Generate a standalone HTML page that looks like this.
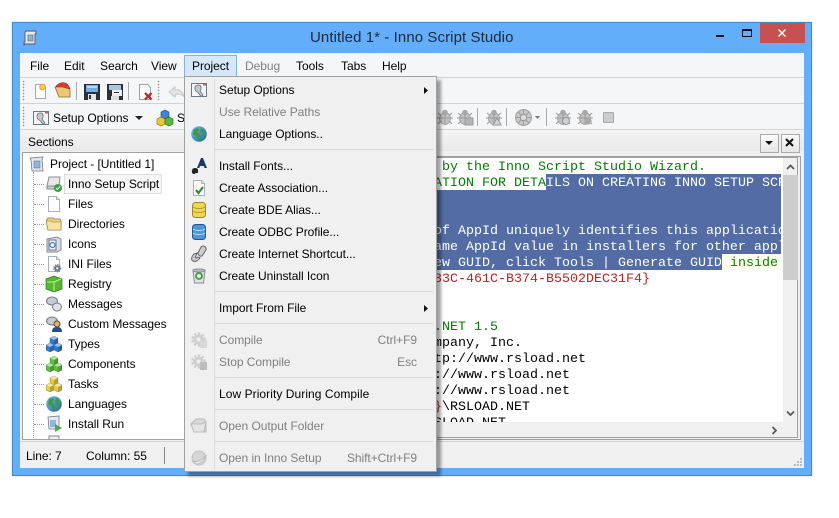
<!DOCTYPE html>
<html><head><meta charset="utf-8">
<style>
html,body{margin:0;padding:0;background:#fff}
#r{position:relative;width:839px;height:518px;overflow:hidden;background:#fff;font:12px "Liberation Sans",sans-serif;color:#000}
#r div,#r svg,#r span.t{position:absolute}
.t{white-space:pre;line-height:16px;letter-spacing:-.05px}
.g{color:#808080}
.c{font:13.33px/16px "Liberation Mono",monospace;white-space:pre;letter-spacing:0;height:14px;padding-top:2px}
.i{width:16px;height:16px;overflow:visible}
.sep{background:#aaa;width:1px}
.ms{left:215px;width:218px;height:1px;background:#d7d7d7}
.h{background-image:radial-gradient(#999 .7px,transparent .9px);background-size:3px 3px;width:3px}
</style></head><body>
<svg width="0" height="0" style="position:absolute">
<defs>
<linearGradient id="gl" x1="0" y1="0" x2="1" y2="1"><stop offset="0" stop-color="#7cc0ee"/><stop offset="1" stop-color="#1c5fa8"/></linearGradient>
<symbol id="cube" viewBox="0 0 16 16"><path d="M4 2l4-2 4 2v5l-4 2-4-2zM0 9l4-2 4 2 4-2 4 2v5l-4 2-4-2-4 2-4-2z" fill="currentColor" stroke="#0005" stroke-width=".6"/><path d="M4 2l4-2 4 2-4 2zM0 9l4-2 4 2-4 2zM8 9l4-2 4 2-4 2z" fill="#fff8"/><path d="M8 4l4-2v5l-4 2zM4 11l4-2v5l-4 2zM12 11l4-2v5l-4 2z" fill="#0003"/></symbol>
<symbol id="globe" viewBox="0 0 16 16"><circle cx="8" cy="8" r="7.800" fill="url(#gl)"/><path d="M3 3l4-1 1 2-2 2 2 2 1 3-2 3-2-4-3-2zM10 2l3 2 1 4-2 1-1-2-2-1zM11 10l2 0-1 3-2 0z" fill="#3f9a3a"/></symbol>
<symbol id="page" viewBox="0 0 16 16"><path d="M2.500.5h8l3 3v12h-11z" fill="#fff" stroke="#aab0b8"/><path d="M10.500.5v3h3" fill="#e8e8e8" stroke="#aab0b8"/></symbol>
<symbol id="folder" viewBox="0 0 16 16"><path d="M0 5l2-3h5l1 1h6l1 2v9H2z" fill="#eccf82" stroke="#97793c" stroke-width=".8"/><path d="M0 5l5 0 1 1h9l0 8H2z" fill="#f8e2a4" stroke="#97793c" stroke-width=".6"/></symbol>
<symbol id="gear" viewBox="0 0 16 16"><circle cx="7.500" cy="7.500" r="5.800" fill="none" stroke="currentColor" stroke-width="3" stroke-dasharray="2.200 1.600"/><circle cx="7.500" cy="7.500" r="5" fill="currentColor"/><circle cx="7.500" cy="7.500" r="2" fill="#eee"/></symbol>
<symbol id="opt" viewBox="0 0 16 16"><rect x=".5" y="1.500" width="15" height="13" fill="#f4f5f6" stroke="#6e7882"/><rect x="12" y="2" width="3" height="1.500" fill="#d55"/><path d="M4 5a3.500 3.500 0 0 1 5-1.500C11 5 10 8 9 9L12 13 10 14.500 7 10.500C5 10 3.500 8 4 5z" fill="#c5c8cc" stroke="#6a7078" stroke-width=".8"/></symbol>
<symbol id="bug" viewBox="0 0 16 16"><ellipse cx="8" cy="9.500" rx="5.500" ry="6" fill="#c2c2c2" stroke="#9a9a9a" stroke-width=".7"/><circle cx="8" cy="3.500" r="2.800" fill="#a8a8a8"/><path d="M1 4l3 2.500M15 4l-3 2.500M0 9h3M16 9h-3M1 15l3-3M15 15l-3-3M8 5v10M3 9h10" stroke="#999" fill="none"/></symbol>
</defs></svg>
<div id="r">
<!-- window -->
<div style="left:12px;top:22px;width:798px;height:452px;background:#63aefb;border:1px solid #3f8cc9;box-shadow:0 0 2px #ccc"></div>
<svg class="i" style="left:22px;top:30px" viewBox="0 0 16 16"><path d="M4 1h10v3h-1v10H3l-1 1v-3h1V2z" fill="#e8e8e8" stroke="#556" stroke-width=".9"/><path d="M6 5h5v6H6z" fill="#8ab4d8" stroke="#556" stroke-width=".6"/></svg>
<span class="t" style="left:310px;top:29px;font-size:15px;line-height:18px;letter-spacing:.08px;color:#1c2a38">Untitled 1* - Inno Script Studio</span>
<svg style="left:716px;top:35px" width="9" height="3"><rect width="8" height="2" fill="#111"/></svg>
<svg style="left:742px;top:29px" width="11" height="9"><rect x=".5" y=".5" width="9" height="7" fill="none" stroke="#111"/><rect x="0" y="0" width="10" height="2" fill="#111"/></svg>
<div style="left:760px;top:23px;width:45px;height:20px;background:#c75050"></div>
<svg style="left:778px;top:29px" width="9" height="9"><path d="M.5.500l7 7M7.500.500l-7 7" stroke="#fff" stroke-width="1.500"/></svg>
<!-- client -->
<div style="left:20px;top:53px;width:784px;height:415px;background:#f0f0f0"></div>
<div style="left:20px;top:53px;width:784px;height:24px;background:#f5f6f8"></div>
<div style="left:20px;top:77px;width:784px;height:1px;background:#d2d2d2"></div>
<div style="left:20px;top:78px;width:784px;height:25px;background:#f5f6f8"></div>
<div style="left:20px;top:103px;width:784px;height:1px;background:#d2d2d2"></div>
<div style="left:20px;top:104px;width:784px;height:25px;background:#f5f6f8"></div>
<div style="left:20px;top:129px;width:784px;height:1px;background:#d2d2d2"></div>
<div style="left:20px;top:130px;width:784px;height:21px;background:linear-gradient(#f4f4f4,#e9e9e9)"></div>
<!-- menu bar -->
<div style="left:184px;top:55px;width:51px;height:20px;background:#d5e7f8;border:1px solid #7eb4ea"></div>
<span class="t" style="left:30px;top:58px">File</span>
<span class="t" style="left:64px;top:58px">Edit</span>
<span class="t" style="left:100px;top:58px">Search</span>
<span class="t" style="left:151px;top:58px">View</span>
<span class="t" style="left:192px;top:58px">Project</span>
<span class="t g" style="left:245px;top:58px">Debug</span>
<span class="t" style="left:296px;top:58px">Tools</span>
<span class="t" style="left:341px;top:58px">Tabs</span>
<span class="t" style="left:382px;top:58px">Help</span>
<!-- toolbar 1 -->
<div class="h" style="left:22px;top:80px;height:21px"></div>
<svg class="i" style="left:32px;top:83px" viewBox="0 0 16 16"><path d="M3.500 1.500h8l2 2v12h-10z" fill="#fff" stroke="#a4aab0"/><circle cx="10.500" cy="4" r="2.800" fill="#f7c948" stroke="#f0a828"/></svg>
<svg class="i" style="left:55px;top:82px" viewBox="0 0 16 16"><path d="M0 5l3-1h9l3 3v8H4z" fill="#ecc874" stroke="#87683a" stroke-width=".8"/><path d="M1 5c1-3 5-5 9-4 3 1 4 3 5 6l-4-1-3-1z" fill="#d93f2b" stroke="#8a2418" stroke-width=".6"/></svg>
<div class="sep" style="left:76px;top:82px;height:18px"></div>
<svg class="i" style="left:84px;top:84px" viewBox="0 0 16 16"><path d="M0 0h16v16H0z" fill="#2b2f38"/><rect x="2" y="1" width="12" height="7" fill="#6cb0ea"/><rect x="3" y="2.500" width="10" height="1" fill="#fff"/><rect x="4" y="10" width="8" height="6" fill="#e4e4e4"/><rect x="5" y="11" width="2" height="4" fill="#333"/></svg>
<svg class="i" style="left:107px;top:84px" viewBox="0 0 16 16"><path d="M0 0h16v16H0z" fill="#2b2f38"/><rect x="2" y="1" width="12" height="5" fill="#a8c6de"/><rect x="5" y="6" width="10" height="6" fill="#eee"/><rect x="7" y="8" width="5" height="1" fill="#333"/><rect x="4" y="12" width="8" height="4" fill="#ddd"/></svg>
<div class="sep" style="left:128px;top:82px;height:18px"></div>
<svg class="i" style="left:138px;top:84px" viewBox="0 0 16 16"><path d="M1.500.5h8l3 3v12h-11z" fill="#fff" stroke="#98a0a8"/><path d="M7 9l6.500 6.500M13.500 9L7 15.500" stroke="#c81e1e" stroke-width="2.200"/></svg>
<div class="h" style="left:157px;top:80px;height:21px"></div>
<svg class="i" style="left:169px;top:84px" viewBox="0 0 16 16"><path d="M0 8l6-5v3c5-1 8 2 9 7-2-3-5-3-8-3l-1 3z" fill="#e4e4e4" stroke="#c8c8c8"/></svg>
<!-- toolbar 2 -->
<div class="h" style="left:22px;top:106px;height:21px"></div>
<svg class="i" style="left:33px;top:110px"><use href="#opt"/></svg>
<span class="t" style="left:53px;top:110px">Setup Options</span>
<svg style="left:135px;top:116px" width="9" height="5"><path d="M0 0h8L4 4z" fill="#222"/></svg>
<svg class="i" style="left:157px;top:110px" viewBox="0 0 16 16"><path d="M4 2l4-2 4 2v5l-4 2-4-2z" fill="#3f86d0" stroke="#246" stroke-width=".6"/><path d="M0 9l4-2 4 2v5l-4 2-4-2z" fill="#e7c73e" stroke="#860" stroke-width=".6"/><path d="M8 9l4-2 4 2v5l-4 2-4-2z" fill="#5cb83c" stroke="#260" stroke-width=".6"/></svg>
<span class="t" style="left:177px;top:110px">Setup</span>
<!-- gray bugs right -->
<svg class="i" style="left:437px;top:109px"><use href="#bug"/></svg>
<svg class="i" style="left:457px;top:109px"><use href="#bug"/><rect x="8" y="9" width="8" height="7" fill="#b4b4b4" stroke="#999"/></svg>
<div class="sep" style="left:477px;top:108px;height:18px"></div>
<svg class="i" style="left:486px;top:109px"><use href="#bug"/><path d="M11 9l4 7H7z" fill="#d4d4d4" stroke="#999"/></svg>
<div class="sep" style="left:506px;top:108px;height:18px"></div>
<svg class="i" style="left:515px;top:109px;width:17px;height:17px" viewBox="0 0 16 16"><circle cx="8" cy="8" r="7.500" fill="#c8c8c8" stroke="#a4a4a4"/><path d="M8 .5v15M.5 8h15M3 3l10 10M13 3L3 13" stroke="#a0a0a0"/><circle cx="8" cy="8" r="3" fill="#ddd" stroke="#999"/></svg>
<svg style="left:535px;top:116px" width="6" height="4"><path d="M0 0h5L2.500 3z" fill="#777"/></svg>
<div class="sep" style="left:546px;top:108px;height:18px"></div>
<svg class="i" style="left:555px;top:109px"><use href="#bug"/><circle cx="11" cy="12" r="3.500" fill="#d0d0d0" stroke="#999"/></svg>
<svg class="i" style="left:577px;top:109px"><use href="#bug"/><circle cx="11" cy="12" r="3.500" fill="#a8a8a8"/></svg>
<div style="left:603px;top:112px;width:9px;height:9px;background:#ccc;border:1px solid #aaa;border-radius:1px"></div>
<!-- sections -->
<span class="t" style="left:28px;top:134px">Sections</span>
<div style="left:760px;top:134px;width:17px;height:17px;background:linear-gradient(#fbfbfb,#e6e6e6);border:1px solid #aaa"></div>
<svg style="left:765px;top:141px" width="9" height="5"><path d="M0 0h8L4 4z" fill="#111"/></svg>
<div style="left:781px;top:134px;width:17px;height:17px;background:linear-gradient(#fbfbfb,#e6e6e6);border:1px solid #aaa"></div>
<svg style="left:785px;top:138px" width="10" height="10"><path d="M1 1l7 7M8 1L1 8" stroke="#111" stroke-width="2"/></svg>
<!-- tree -->
<div style="left:22px;top:152px;width:165px;height:286px;background:#fff;border:1px solid #a0a0a0"></div>
<div style="left:33px;top:172px;width:0;height:266px;border-left:1px dotted #999"></div>
<div style="left:34px;top:184px;width:10px;border-top:1px dotted #999"></div>
<div style="left:34px;top:204px;width:10px;border-top:1px dotted #999"></div>
<div style="left:34px;top:224px;width:10px;border-top:1px dotted #999"></div>
<div style="left:34px;top:244px;width:10px;border-top:1px dotted #999"></div>
<div style="left:34px;top:264px;width:10px;border-top:1px dotted #999"></div>
<div style="left:34px;top:284px;width:10px;border-top:1px dotted #999"></div>
<div style="left:34px;top:304px;width:10px;border-top:1px dotted #999"></div>
<div style="left:34px;top:324px;width:10px;border-top:1px dotted #999"></div>
<div style="left:34px;top:344px;width:10px;border-top:1px dotted #999"></div>
<div style="left:34px;top:364px;width:10px;border-top:1px dotted #999"></div>
<div style="left:34px;top:384px;width:10px;border-top:1px dotted #999"></div>
<div style="left:34px;top:404px;width:10px;border-top:1px dotted #999"></div>
<div style="left:34px;top:424px;width:10px;border-top:1px dotted #999"></div>
<svg class="i" style="left:29px;top:156px" viewBox="0 0 16 16"><path d="M1 2l13-1-1 3 1 11H3L2 4z" fill="#dfe8f0" stroke="#778" stroke-width=".8"/><path d="M5 5h6v7H5z" fill="#8fb8da" stroke="#667" stroke-width=".5"/></svg>
<span class="t" style="left:50px;top:156px">Project - [Untitled 1]</span>
<div style="left:64px;top:174px;width:96px;height:18px;background:#f7f7f7;border:1px solid #dcdcdc"></div>
<svg class="i" style="left:46px;top:176px" viewBox="0 0 16 16"><path d="M3 1h11l-1 9H1z" fill="#e8e8e8" stroke="#889"/><path d="M1 10h11v3H1z" fill="#ccc" stroke="#889"/><circle cx="12" cy="12" r="4" fill="#3aa040"/><path d="M10 12l1.500 1.500L14 10.500" stroke="#fff" fill="none"/></svg>
<span class="t" style="left:68px;top:176px">Inno Setup Script</span>
<svg class="i" style="left:46px;top:196px"><use href="#page"/></svg>
<span class="t" style="left:68px;top:196px">Files</span>
<svg class="i" style="left:46px;top:216px"><use href="#folder"/></svg>
<span class="t" style="left:68px;top:216px">Directories</span>
<svg class="i" style="left:46px;top:236px" viewBox="0 0 16 16"><path d="M1 3l10-2 4 2v11l-4 2H1z" fill="#d6dde4" stroke="#889"/><path d="M3 4h7v10H3z" fill="#f0f4f8" stroke="#778"/><circle cx="6.500" cy="9" r="2.500" fill="none" stroke="#4a80c0" stroke-width="1.200"/></svg>
<span class="t" style="left:68px;top:236px">Icons</span>
<svg class="i" style="left:46px;top:256px"><use href="#page"/></svg>
<svg class="i" style="left:53px;top:264px;width:9px;height:9px;color:#6c7a88" viewBox="0 0 16 16"><use href="#gear"/></svg>
<span class="t" style="left:68px;top:256px">INI Files</span>
<svg class="i" style="left:46px;top:276px" viewBox="0 0 16 16"><path d="M0 3l8-3 8 3v10l-8 3-8-3z" fill="#55b82f" stroke="#2c7a16" stroke-width=".7"/><path d="M1 6h7v9M8 6l7-3" stroke="#c2f0a0" fill="none"/></svg>
<span class="t" style="left:68px;top:276px">Registry</span>
<svg class="i" style="left:46px;top:296px" viewBox="0 0 16 16"><ellipse cx="6" cy="5" rx="5.500" ry="4" fill="#c5ccd4" stroke="#778"/><ellipse cx="11" cy="11" rx="4.500" ry="4" fill="#dfe3e8" stroke="#778"/></svg>
<span class="t" style="left:68px;top:296px">Messages</span>
<svg class="i" style="left:46px;top:316px" viewBox="0 0 16 16"><ellipse cx="6" cy="5" rx="5.500" ry="4" fill="#c5ccd4" stroke="#778"/><circle cx="11" cy="8" r="3" fill="#e6b070" stroke="#643"/><path d="M6 16c0-4 2-5 5-5s5 1 5 5z" fill="#1f4e8c"/></svg>
<span class="t" style="left:68px;top:316px">Custom Messages</span>
<svg class="i" style="left:46px;top:336px;color:#2f7bd0"><use href="#cube"/></svg>
<span class="t" style="left:68px;top:336px">Types</span>
<svg class="i" style="left:46px;top:356px;color:#5cc23a"><use href="#cube"/></svg>
<span class="t" style="left:68px;top:356px">Components</span>
<svg class="i" style="left:46px;top:376px;color:#e8cb3c"><use href="#cube"/></svg>
<span class="t" style="left:68px;top:376px">Tasks</span>
<svg class="i" style="left:46px;top:396px"><use href="#globe"/></svg>
<span class="t" style="left:68px;top:396px">Languages</span>
<svg class="i" style="left:46px;top:416px" viewBox="0 0 16 16"><path d="M2 1l11-1v13H3z" fill="#e4eaf0" stroke="#778" stroke-width=".8"/><path d="M4 4h6v7H4z" fill="#8fb8da"/><path d="M9 8l7 4-7 4z" fill="#4fae3a"/></svg>
<span class="t" style="left:68px;top:416px">Install Run</span>
<svg class="i" style="left:46px;top:436px;height:3px" viewBox="0 0 16 3"><path d="M3 3V0h10v3" fill="#eee" stroke="#889"/></svg>
<!-- editor -->
<div style="left:187px;top:156px;width:612px;height:282px;background:#f0f0f0;border:1px solid #a0a0a0"></div>
<div style="left:188px;top:157px;width:608px;height:279px;border:1px solid #a0a0a0"></div>
<div style="left:189px;top:158px;width:594px;height:264px;background:#fff"></div>
<div style="left:189px;top:158px;width:592px;height:264px;background:#fff;overflow:hidden" id="ed">
<div style="left:357px;top:16px;width:235px;height:16px;background:#536ca3"></div>
<div style="left:0;top:32px;width:592px;height:64px;background:#536ca3"></div>
<div style="left:0;top:96px;width:533px;height:16px;background:#536ca3"></div>
<div style="left:533px;top:96px;width:59px;height:16px;background:#fffff0"></div>
<div class="c" style="left:253px;top:0;color:#008000">by the Inno Script Studio Wizard.</div>
<div class="c" style="left:245px;top:16px;color:#008000">ATION FOR DETA</div>
<div class="c" style="left:357px;top:16px;color:#fff">ILS ON CREATING INNO SETUP SCRIPT FILES</div>
<div class="c" style="left:245px;top:64px;color:#fff">of AppId uniquely identifies this application.</div>
<div class="c" style="left:245px;top:80px;color:#fff">ame AppId value in installers for other applications.</div>
<div class="c" style="left:245px;top:96px;color:#fff">ew GUID, click Tools | Generate GUID</div>
<div class="c" style="left:533px;top:96px;color:#008000"> inside the IDE.</div>
<div class="c" style="left:245px;top:112px;color:#c02020">83C-461C-B374-B5502DEC31F4}</div>
<div class="c" style="left:245px;top:160px;color:#008000">.NET 1.5</div>
<div class="c" style="left:245px;top:176px">mpany, Inc.</div>
<div class="c" style="left:245px;top:192px">tp://www.rsload.net</div>
<div class="c" style="left:245px;top:208px">://www.rsload.net</div>
<div class="c" style="left:245px;top:224px">://www.rsload.net</div>
<div class="c" style="left:245px;top:240px"><span style="color:#a03030">}</span>\RSLOAD.NET</div>
<div class="c" style="left:245px;top:256px">SLOAD.NET</div>
</div>
<!-- scrollbars -->
<div style="left:783px;top:175px;width:15px;height:105px;background:#cdcdcd"></div>
<svg style="left:786px;top:164px" width="9" height="7"><path d="M1 5l3.500-3.500L8 5" fill="none" stroke="#555" stroke-width="1.700"/></svg>
<svg style="left:786px;top:410px" width="9" height="7"><path d="M1 1.500L4.500 5 8 1.500" fill="none" stroke="#555" stroke-width="1.700"/></svg>
<svg style="left:771px;top:426px" width="7" height="9"><path d="M1.500 1L5 4.500 1.500 8" fill="none" stroke="#555" stroke-width="1.700"/></svg>
<!-- status -->
<div style="left:20px;top:441px;width:784px;height:1px;background:#d2d2d2"></div>
<span class="t" style="left:26px;top:448px">Line: 7</span>
<span class="t" style="left:86px;top:448px">Column: 55</span>
<div class="sep" style="left:164px;top:447px;height:17px;background:#888"></div>
<svg style="left:793px;top:458px" width="10" height="9"><path d="M7 0h2v2H7zM4 3h2v2H4zM7 3h2v2H7zM1 6h2v2H1zM4 6h2v2H4zM7 6h2v2H7z" fill="#bbb"/></svg>
<!-- dropdown -->
<div style="left:184px;top:76px;width:251px;height:394px;background:#f0f0f0;border:1px solid #a0a0a0;box-shadow:4px 4px 3px rgba(0,0,0,.38)"></div>
<div style="left:214px;top:79px;width:1px;height:390px;background:#dcdcdc"></div>
<div class="ms" style="top:149px"></div>
<div class="ms" style="top:291px"></div>
<div class="ms" style="top:323px"></div>
<div class="ms" style="top:377px"></div>
<div class="ms" style="top:409px"></div>
<div class="ms" style="top:441px"></div>
<svg class="i" style="left:191px;top:82px"><use href="#opt"/></svg>
<span class="t" style="left:219px;top:82px">Setup Options</span>
<svg style="left:424px;top:87px" width="5" height="7"><path d="M0 0l4 3.500L0 7z" fill="#111"/></svg>
<span class="t g" style="left:219px;top:104px">Use Relative Paths</span>
<svg class="i" style="left:191px;top:126px"><use href="#globe"/></svg>
<span class="t" style="left:219px;top:126px">Language Options..</span>
<svg class="i" style="left:191px;top:157px" viewBox="0 0 16 16"><path d="M6 11L10 1h2l4 10h-2.500l-.7-2H9l-.7 2z" fill="#1a3a6a"/><path d="M1 15a3 3 0 0 1 3-4c2 0 3 1 3 2v3H5v-1a2 2 0 0 1-4 0z" fill="#222"/></svg>
<span class="t" style="left:219px;top:158px">Install Fonts...</span>
<svg class="i" style="left:191px;top:180px"><use href="#page"/><path d="M5 10l2.500 3L12 7" stroke="#2c8a2c" stroke-width="2.200" fill="none"/></svg>
<span class="t" style="left:219px;top:180px">Create Association...</span>
<svg class="i" style="left:191px;top:202px" viewBox="0 0 16 16"><rect x="1.500" y="0.500" width="13" height="15" rx="3" fill="#efd558" stroke="#a08a20"/><path d="M2 5c3 2 9 2 12 0M2 9c3 2 9 2 12 0" stroke="#b09a30" fill="none"/></svg>
<span class="t" style="left:219px;top:202px">Create BDE Alias...</span>
<svg class="i" style="left:191px;top:224px" viewBox="0 0 16 16"><rect x="1.500" y="0.500" width="13" height="15" rx="3" fill="#4d95de" stroke="#20558f"/><path d="M2 5c3 2 9 2 12 0M2 9c3 2 9 2 12 0" stroke="#bcdcf8" fill="none"/></svg>
<span class="t" style="left:219px;top:224px">Create ODBC Profile...</span>
<svg class="i" style="left:191px;top:246px" viewBox="0 0 16 16"><path d="M10 1a3 3 0 0 1 5 3l-4 6a3 3 0 0 1-4-3zM3 8l3-1-1 3c-1 1-1 2 0 2l2-1 2 1c-2 3-5 4-7 3s-2-4 1-7z" fill="#ccc" stroke="#666" stroke-width="1"/></svg>
<span class="t" style="left:219px;top:246px">Create Internet Shortcut...</span>
<svg class="i" style="left:191px;top:268px" viewBox="0 0 16 16"><path d="M2 2h12l-1.500 13h-9z" fill="#dfe5e8" stroke="#889"/><ellipse cx="8" cy="2.500" rx="6" ry="1.500" fill="#b8c0c8" stroke="#889"/><circle cx="8" cy="8" r="3" fill="none" stroke="#3aa040" stroke-width="1.800"/></svg>
<span class="t" style="left:219px;top:268px">Create Uninstall Icon</span>
<span class="t" style="left:219px;top:300px">Import From File</span>
<svg style="left:424px;top:305px" width="5" height="7"><path d="M0 0l4 3.500L0 7z" fill="#111"/></svg>
<svg class="i" style="left:191px;top:332px;color:#cfcfcf"><use href="#gear"/><rect x="9" y="8" width="7" height="8" fill="#d8d8d8"/></svg>
<span class="t g" style="left:219px;top:332px">Compile</span>
<span class="t g" style="right:422px;top:332px">Ctrl+F9</span>
<svg class="i" style="left:191px;top:354px;color:#cfcfcf"><use href="#gear"/><rect x="9" y="8" width="7" height="8" fill="#bdbdbd"/></svg>
<span class="t g" style="left:219px;top:354px">Stop Compile</span>
<span class="t g" style="right:422px;top:354px">Esc</span>
<span class="t" style="left:219px;top:386px;letter-spacing:.06px">Low Priority During Compile</span>
<svg class="i" style="left:191px;top:418px" viewBox="0 0 16 16"><path d="M2 4l3-3h8l2 3v10H3L0 6z" fill="#d9d9d9" stroke="#bbb"/><path d="M0 6h10l5-2-2 10H3z" fill="#e4e4e4" stroke="#bbb"/></svg>
<span class="t g" style="left:219px;top:418px">Open Output Folder</span>
<svg class="i" style="left:191px;top:450px" viewBox="0 0 16 16"><circle cx="8" cy="8" r="7" fill="#d6d6d6" stroke="#c0c0c0"/><path d="M1 11c4 2 10 0 14-6-2 6-6 9-10 9z" fill="#f4f4f4" stroke="#bbb"/></svg>
<span class="t g" style="left:219px;top:450px">Open in Inno Setup</span>
<span class="t g" style="right:422px;top:450px">Shift+Ctrl+F9</span>
</div>
</body></html>
